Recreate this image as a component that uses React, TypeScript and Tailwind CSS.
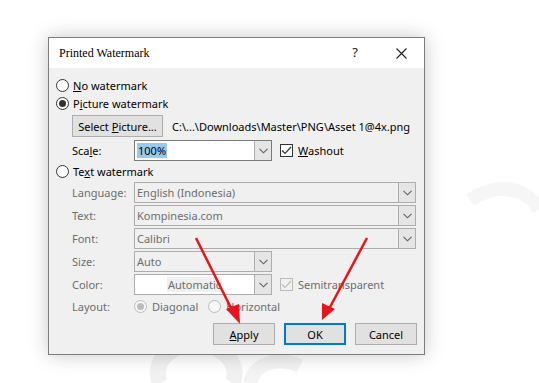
import React from 'react'

const ui = { fontFamily: '"Segoe UI", "Noto Sans", "Open Sans", sans-serif' }

function Chevron({ color = '#606060' }: { color?: string }) {
  return (
    <svg width="9" height="6" viewBox="0 0 9 6" fill="none">
      <path d="M0.5 0.8 L4.5 4.8 L8.5 0.8" stroke={color} strokeWidth="1.1" />
    </svg>
  )
}

function Radio({ checked, disabled }: { checked?: boolean; disabled?: boolean }) {
  return (
    <span
      className={`flex h-[13px] w-[13px] shrink-0 items-center justify-center rounded-full border ${
        disabled ? 'border-[#bcbcbc] bg-[#f7f7f7]' : 'border-[#333] bg-white'
      }`}
    >
      {checked && (
        <span className={`h-[7px] w-[7px] rounded-full ${disabled ? 'bg-[#bcbcbc]' : 'bg-[#333]'}`} />
      )}
    </span>
  )
}

function Check({ disabled }: { disabled?: boolean }) {
  return (
    <span
      className={`flex h-[13px] w-[13px] shrink-0 items-center justify-center border ${
        disabled ? 'border-[#bcbcbc] bg-[#f0f0f0]' : 'border-[#333] bg-white'
      }`}
    >
      <svg width="11" height="9" viewBox="0 0 11 9" fill="none">
        <path d="M1 4.5 L4 7.5 L10 1" stroke={disabled ? '#bcbcbc' : '#333'} strokeWidth="1.2" />
      </svg>
    </span>
  )
}

function Combo({
  value,
  width,
  disabled,
  white,
  center,
  selected,
}: {
  value: string
  width: string
  disabled?: boolean
  white?: boolean
  center?: boolean
  selected?: boolean
}) {
  return (
    <div
      className={`flex h-[21px] ${width} shrink-0 items-stretch border ${
        disabled ? 'border-[#adadad]' : 'border-[#7a7a7a]'
      } ${white ? 'bg-white' : disabled ? 'bg-[#f0f0f0]' : 'bg-white'}`}
    >
      <div
        className={`flex flex-1 items-center px-[2px] ${center ? 'justify-center' : ''} ${
          disabled ? 'text-[#6d6d6d]' : 'text-black'
        }`}
      >
        {selected ? (
          <span className="bg-[#99c9ef] px-[1px] leading-[15px]">{value}</span>
        ) : center ? (
          <span className="bg-[#f0f0f0] px-[1px] leading-[15px]">{value}</span>
        ) : (
          value
        )}
      </div>
      <div className="flex w-[17px] items-center justify-center border-l border-[#adadad] bg-[#e5e5e5]">
        <Chevron />
      </div>
    </div>
  )
}

function Btn({ children, focus }: { children: React.ReactNode; focus?: boolean }) {
  return (
    <div
      className={`flex h-[22px] w-[62px] items-center justify-center bg-[#e1e1e1] text-black ${
        focus ? 'border-2 border-[#0078d7]' : 'border border-[#adadad]'
      }`}
    >
      {children}
    </div>
  )
}

function Label({ children, dim }: { children: React.ReactNode; dim?: boolean }) {
  return <span className={`w-[62px] shrink-0 ${dim ? 'text-[#6d6d6d]' : 'text-black'}`}>{children}</span>
}

export default function App() {
  return (
    <div className="relative h-[383px] w-[539px] overflow-hidden bg-white" style={ui}>
      {/* faint site watermark */}
      <svg className="absolute left-0 top-0" width="539" height="383" fill="none">
        <path d="M160 383 C150 360 175 340 205 345 C230 350 240 370 232 383" stroke="#f1f1f1" strokeWidth="16" />
        <path d="M250 383 C255 362 280 356 300 366" stroke="#f3f3f3" strokeWidth="14" />
        <path d="M470 200 C500 180 530 190 539 210" stroke="#f6f6f6" strokeWidth="14" />
      </svg>

      <div className="relative ml-[48px] mt-[37px] flex h-[318px] w-[377px] flex-col border border-[#7c7c7c] bg-[#f0f0f0] shadow-[0_0_18px_rgba(0,0,0,0.22)]">
        {/* title bar */}
        <div className="flex h-[30px] shrink-0 items-center bg-white pl-[10px] pr-[17px]">
          <span className="flex-1 text-[12px] text-black" style={{ fontFamily: '"Liberation Serif", serif' }}>
            Printed Watermark
          </span>
          <span className="mr-[38px] text-[13px] text-[#222]">?</span>
          <svg width="11" height="11" viewBox="0 0 11 11">
            <path d="M0.5 0.5 L10.5 10.5 M10.5 0.5 L0.5 10.5" stroke="#222" strokeWidth="1.1" />
          </svg>
        </div>

        {/* body */}
        <div className="flex flex-col whitespace-nowrap pl-[7px] pt-[8px] text-[11px] leading-[15px] text-black">
          <div className="flex h-[18px] items-center gap-[4px]">
            <Radio />
            <span>
              <u>N</u>o watermark
            </span>
          </div>
          <div className="flex h-[18px] items-center gap-[4px]">
            <Radio checked />
            <span>
              P<u>i</u>cture watermark
            </span>
          </div>

          <div className="ml-[16px] mt-[3px] flex items-center">
            <div className="flex h-[22px] w-[91px] items-center justify-center border border-[#adadad] bg-[#e1e1e1]">
              Select <u className="ml-[3px]">P</u>icture...
            </div>
            <span className="ml-[9px]">C:\...\Downloads\Master\PNG\Asset 1@4x.png</span>
          </div>

          <div className="ml-[16px] mt-[3px] flex items-center">
            <Label>
              Sca<u>l</u>e:
            </Label>
            <Combo value="100%" width="w-[138px]" selected />
            <span className="ml-[8px] flex items-center gap-[5px]">
              <Check />
              <span>
                <u>W</u>ashout
              </span>
            </span>
          </div>

          <div className="flex h-[20px] items-center gap-[4px]">
            <Radio />
            <span>
              Te<u>x</u>t watermark
            </span>
          </div>

          <div className="ml-[16px] mt-[1px] flex flex-col gap-[2px]">
            <div className="flex items-center">
              <Label dim>Language:</Label>
              <Combo value="English (Indonesia)" width="w-[282px]" disabled />
            </div>
            <div className="flex items-center">
              <Label dim>Text:</Label>
              <Combo value="Kompinesia.com" width="w-[282px]" disabled />
            </div>
            <div className="flex items-center">
              <Label dim>Font:</Label>
              <Combo value="Calibri" width="w-[282px]" disabled />
            </div>
            <div className="flex items-center">
              <Label dim>Size:</Label>
              <Combo value="Auto" width="w-[138px]" disabled />
            </div>
            <div className="flex items-center">
              <Label dim>Color:</Label>
              <Combo value="Automatic" width="w-[138px]" disabled white center />
              <span className="ml-[8px] flex items-center gap-[5px] text-[#6d6d6d]">
                <Check disabled />
                Semitransparent
              </span>
            </div>
            <div className="flex h-[18px] items-center text-[#6d6d6d]">
              <Label dim>Layout:</Label>
              <span className="flex items-center gap-[5px]">
                <Radio checked disabled />
                Diagonal
              </span>
              <span className="ml-[10px] flex items-center gap-[5px]">
                <Radio disabled />
                Horizontal
              </span>
            </div>
          </div>

          <div className="mr-[7px] mt-[8px] flex justify-end gap-[9px]">
            <Btn>
              <u>A</u>pply
            </Btn>
            <Btn focus>OK</Btn>
            <Btn>Cancel</Btn>
          </div>
        </div>
      </div>

      {/* red arrows */}
      <svg className="absolute left-0 top-0" width="539" height="383" fill="none">
        <line x1="196" y1="238" x2="233" y2="312" stroke="#e8141c" strokeWidth="2.5" />
        <polygon points="240,324 226,309 239,304" fill="#e8141c" />
        <line x1="367" y1="238" x2="329" y2="309" stroke="#e8141c" strokeWidth="2.5" />
        <polygon points="322,320 322,303 335,309" fill="#e8141c" />
      </svg>
    </div>
  )
}
